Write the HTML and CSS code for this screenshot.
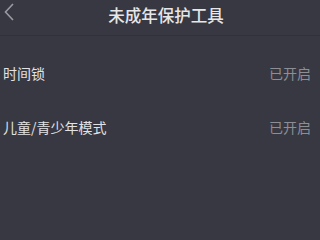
FILE: index.html
```html
<!DOCTYPE html>
<html lang="zh">
<head>
<meta charset="utf-8">
<link rel="stylesheet" href="styles.css">
</head>
<body>
<div class="page">
  <header class="bar">
    <span class="back"><svg width="10" height="18" viewBox="0 0 10 18"><path d="M9 1 L1.5 9 L9 17" fill="none" stroke="#9a9ba2" stroke-width="1.6"/></svg></span>
    <h1 class="title">未成年保护工具</h1>
  </header>
  <div class="list">
    <div class="row"><span class="label">时间锁</span><span class="state">已开启</span></div>
    <div class="row"><span class="label">儿童/青少年模式</span><span class="state">已开启</span></div>
  </div>
</div>
</body>
</html>
```
FILE: styles.css
```css
html, body { margin: 0; padding: 0; }
body {
  width: 320px; height: 240px; overflow: hidden;
  background: #373841;
  font-family: "Noto Sans CJK SC", "Noto Sans", sans-serif;
}
.page { display: flex; flex-direction: column; height: 240px; }
.bar {
  height: 36px; position: relative;
  display: flex; align-items: center; justify-content: center;
  padding-left: 12px;
  border-bottom: 1px solid #30313a;
  box-sizing: border-box;
}
.back { position: absolute; left: 4px; top: 3px; display: flex; }
.title { margin: 0; font-size: 16.5px; font-weight: 500; color: #e6e6e8; line-height: 22px; margin-top: -6px; }
.list { display: flex; flex-direction: column; padding-top: 10px; }
.row {
  height: 54px; display: flex; align-items: center; justify-content: space-between;
  padding: 0 9px 0 3px;
}
.label { font-size: 14px; color: #e2e2e4; }
.state { font-size: 14px; color: #8d8e95; }
```
